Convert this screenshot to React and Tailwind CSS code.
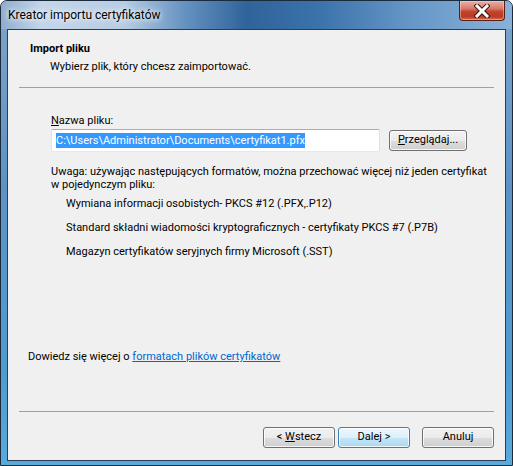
const TITLE_BG =
  'bg-[linear-gradient(90deg,#8eadcf_0%,#c4d6e9_8%,#b7cde4_24%,#6592c0_36%,#2f649a_48%,#3a72aa_62%,#6596c6_80%,#8ab2d9_100%)]'

function CloseButton() {
  return (
    <div className="absolute left-[458px] top-0 flex h-[20px] w-[46px] items-center justify-center rounded-b-[4px] border border-t-0 border-[#5b1e14] bg-[linear-gradient(180deg,#e9b2a5_0%,#d9796a_40%,#c2452c_55%,#b83a22_80%,#d36a4c_100%)] shadow-[inset_0_0_0_1px_rgba(255,220,210,0.45)]">
      <svg width="16" height="14" viewBox="0 0 16 14">
        <path d="M3 2 L13 12 M13 2 L3 12" stroke="#3a1410" strokeWidth="5" strokeLinecap="square" />
        <path d="M3 2 L13 12 M13 2 L3 12" stroke="#ffffff" strokeWidth="3" strokeLinecap="square" />
      </svg>
    </div>
  )
}

function Button({ children, focused, wide }) {
  return (
    <div
      className={
        'flex h-[21px] items-center justify-center rounded-[3px] border text-black shadow-[inset_0_0_0_1px_rgba(255,255,255,0.8)] ' +
        (wide ? 'w-[78px] ' : 'w-[72px] ') +
        (focused
          ? 'border-[#3c7fb1] bg-[linear-gradient(180deg,#ecf7fd_0%,#dcf0fb_50%,#c3e5f7_51%,#aed8ef_100%)]'
          : 'border-[#707070] bg-[linear-gradient(180deg,#f2f2f2_0%,#ebebeb_50%,#dddddd_51%,#cfcfcf_100%)]')
      }
    >
      {children}
    </div>
  )
}

export default function App() {
  return (
    <div className="relative flex h-[466px] w-[513px] flex-col overflow-hidden rounded-t-[7px] border border-[#1b2b3c] bg-[linear-gradient(180deg,#7fa4ca_0%,#5d93c4_40%,#4f9bd0_80%,#5aaadc_100%)] font-['Roboto',sans-serif] text-[11px] text-black">
      <div className={'flex h-[28px] shrink-0 items-center pl-[7px] ' + TITLE_BG}>
        <span className="text-[12px] leading-[15px] [text-shadow:0_0_8px_#ffffff,0_0_4px_#ffffff]">
          Kreator importu certyfikatów
        </span>
      </div>
      <CloseButton />

      <div className="mx-[6px] mb-[4px] flex flex-1 flex-col border border-[#2a3d54] bg-[#f0f0f0]">
        <div className="pl-[22px] pt-[11px] font-bold leading-[15px]">Import pliku</div>
        <div className="mt-[3px] pl-[42px] leading-[15px]">Wybierz plik, który chcesz zaimportować.</div>
        <div className="ml-[11px] mt-[13px] h-px w-[475px] bg-[#a0a0a0]" />

        <div className="mt-[25px] pl-[43px] leading-[15px]">
          <span className="underline">N</span>azwa pliku:
        </div>
        <div className="mt-px flex items-start pl-[43px]">
          <div className="flex h-[23px] w-[329px] items-center rounded-[2px] border border-[#abadb3] border-b-[#e3e9ef] border-l-[#e2e3ea] border-r-[#dbdfe6] bg-white pl-[4px]">
            <span className="bg-[#3399ff] leading-[15px] text-white">
              C:\Users\Administrator\Documents\certyfikat1.pfx
            </span>
          </div>
          <div className="ml-[9px] mt-px">
            <Button wide>
              <span>
                <span className="underline">P</span>rzeglądaj...
              </span>
            </Button>
          </div>
        </div>

        <div className="mt-[13px] whitespace-nowrap pl-[43px] leading-[13px]">
          Uwaga: używając następujących formatów, można przechować więcej niż jeden certyfikat
          <br />
          w pojedynczym pliku:
        </div>
        <div className="mt-[5px] flex flex-col gap-[9px] pl-[58px] leading-[15px]">
          <div>Wymiana informacji osobistych- PKCS #12 (.PFX,.P12)</div>
          <div>Standard składni wiadomości kryptograficznych - certyfikaty PKCS #7 (.P7B)</div>
          <div>Magazyn certyfikatów seryjnych firmy Microsoft (.SST)</div>
        </div>

        <div className="mt-[90px] pl-[20px] leading-[15px]">
          Dowiedz się więcej o{' '}
          <span className="text-[#0066cc] underline">formatach plików certyfikatów</span>
        </div>

        <div className="ml-[11px] mt-[47px] h-px w-[475px] bg-[#a0a0a0]" />

        <div className="mt-[15px] flex justify-end pr-[11px]">
          <Button>
            <span>
              &lt; <span className="underline">W</span>stecz
            </span>
          </Button>
          <div className="ml-[3px]">
            <Button focused>Dalej &gt;</Button>
          </div>
          <div className="ml-[12px]">
            <Button>Anuluj</Button>
          </div>
        </div>
      </div>
    </div>
  )
}
